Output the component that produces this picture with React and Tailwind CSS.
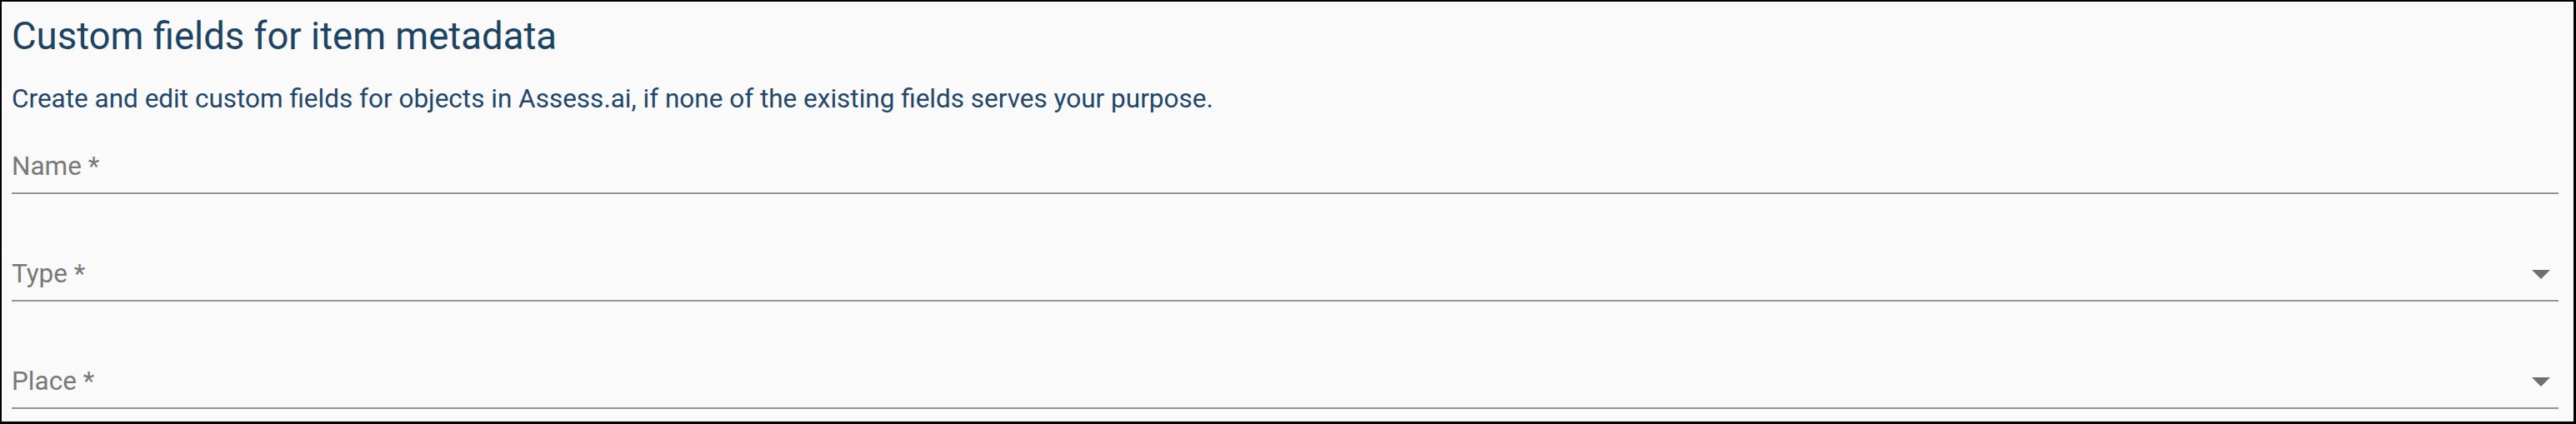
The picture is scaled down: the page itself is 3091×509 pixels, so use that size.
import React from "react";

const fields = [
  { label: "Name *", select: false },
  { label: "Type *", select: true },
  { label: "Place *", select: true },
];

function Field({ label, select }) {
  return (
    <div className="mt-[78px] first:mt-0 border-b-2 border-[#949494] pb-[13px]">
      <div className="flex items-center justify-between h-[36px]">
        <span className="text-[31.5px] leading-[36px] text-[#787878]">{label}</span>
        {select && (
          <svg width="22" height="11" viewBox="0 0 22 11" className="mr-[10px]">
            <path d="M0 0h22L11 11z" fill="#6f6f6f" />
          </svg>
        )}
      </div>
    </div>
  );
}

export default function App() {
  return (
    <div
      className="w-[3091px] h-[509px] box-border bg-[#fafafa] border-2 border-r-[3px] border-b-[3px] border-black pl-3 pr-[18px] pt-[15px]"
      style={{ fontFamily: "Roboto, 'Liberation Sans', sans-serif" }}
    >
      <h1 className="text-[45.5px] leading-[54px] font-normal text-[#1b4364]">
        Custom fields for item metadata
      </h1>
      <p className="mt-[25px] text-[31.5px] leading-[45px] text-[#22476a]">
        Create and edit custom fields for objects in Assess.ai, if none of the existing fields serves your purpose.
      </p>
      <div className="mt-[41px] flex flex-col">
        {fields.map((f) => (
          <Field key={f.label} label={f.label} select={f.select} />
        ))}
      </div>
    </div>
  );
}
